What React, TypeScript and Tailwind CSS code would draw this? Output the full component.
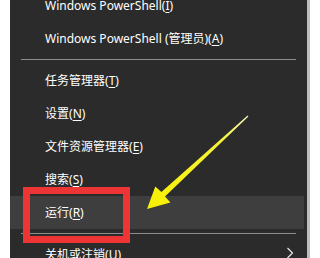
type Item = { label: string; key: string; hover?: boolean; sub?: boolean };

const groups: Item[][] = [
    [
        { label: "Windows PowerShell", key: "I" },
        { label: "Windows PowerShell (管理员)", key: "A" },
    ],
    [
        { label: "任务管理器", key: "T" },
        { label: "设置", key: "N" },
        { label: "文件资源管理器", key: "E" },
        { label: "搜索", key: "S" },
        { label: "运行", key: "R", hover: true },
    ],
    [{ label: "关机或注销", key: "U", sub: true }],
];

function MenuRow({ item }: { item: Item }) {
    return (
        <div
            className={`flex h-[33px] shrink-0 items-center justify-between pl-[35px] pr-[10px] mr-[3px] ${
                item.hover ? "bg-[#3e3e3e]" : ""
            }`}
        >
            <span className="whitespace-nowrap">
                {item.label}(<span className="underline underline-offset-2">{item.key}</span>)
            </span>
            {item.sub && (
                <svg width="8" height="12" viewBox="0 0 8 12" className="mt-[-4px]">
                    <path d="M1.5 1 L6.5 6 L1.5 11" fill="none" stroke="#e8e8e8" strokeWidth="1.2" />
                </svg>
            )}
        </div>
    );
}

export default function App() {
    return (
        <div className="relative flex w-[312px] h-[258px] overflow-hidden bg-white">
            <div className="w-[10px] shrink-0 bg-white" />

            <div
                className="flex w-[297px] shrink-0 flex-col bg-[#2b2b2b] text-[12px] text-white"
                style={{ fontFamily: '"Noto Sans", "Noto Sans CJK SC", sans-serif' }}
            >
                <div className="mt-[-11px] flex flex-col">
                    {groups.map((group, gi) => (
                        <div key={gi} className="flex flex-col">
                            {gi > 0 && (
                                <div className="flex h-[9px] items-center px-[11px]">
                                    <div className="h-px w-full bg-[#8c8c8c]" />
                                </div>
                            )}
                            {group.map(item => (
                                <MenuRow key={item.key} item={item} />
                            ))}
                        </div>
                    ))}
                </div>
            </div>

            <div className="w-[3px] shrink-0 bg-[#bdbdbd]" />
            <div className="flex-1 bg-white" />

            {/* annotation: red frame */}
            <div className="pointer-events-none absolute left-[23px] top-[187px] h-[56px] w-[107px] border-[7px] border-[#ee3535]" />

            {/* annotation: yellow arrow */}
            <svg className="pointer-events-none absolute left-0 top-0" width="312" height="258" viewBox="0 0 312 258">
                <defs>
                    <linearGradient id="arrowFill" x1="248" y1="116" x2="147" y2="209" gradientUnits="userSpaceOnUse">
                        <stop offset="0" stopColor="#f3f3c0" />
                        <stop offset="0.25" stopColor="#f6f43a" />
                        <stop offset="1" stopColor="#f8f000" />
                    </linearGradient>
                </defs>
                <polygon
                    points="247.6,115.6 161.4,192 155.3,186.4 147,209 170.4,202.6 165,196.4 248.4,116.4"
                    fill="url(#arrowFill)"
                />
            </svg>
        </div>
    );
}
